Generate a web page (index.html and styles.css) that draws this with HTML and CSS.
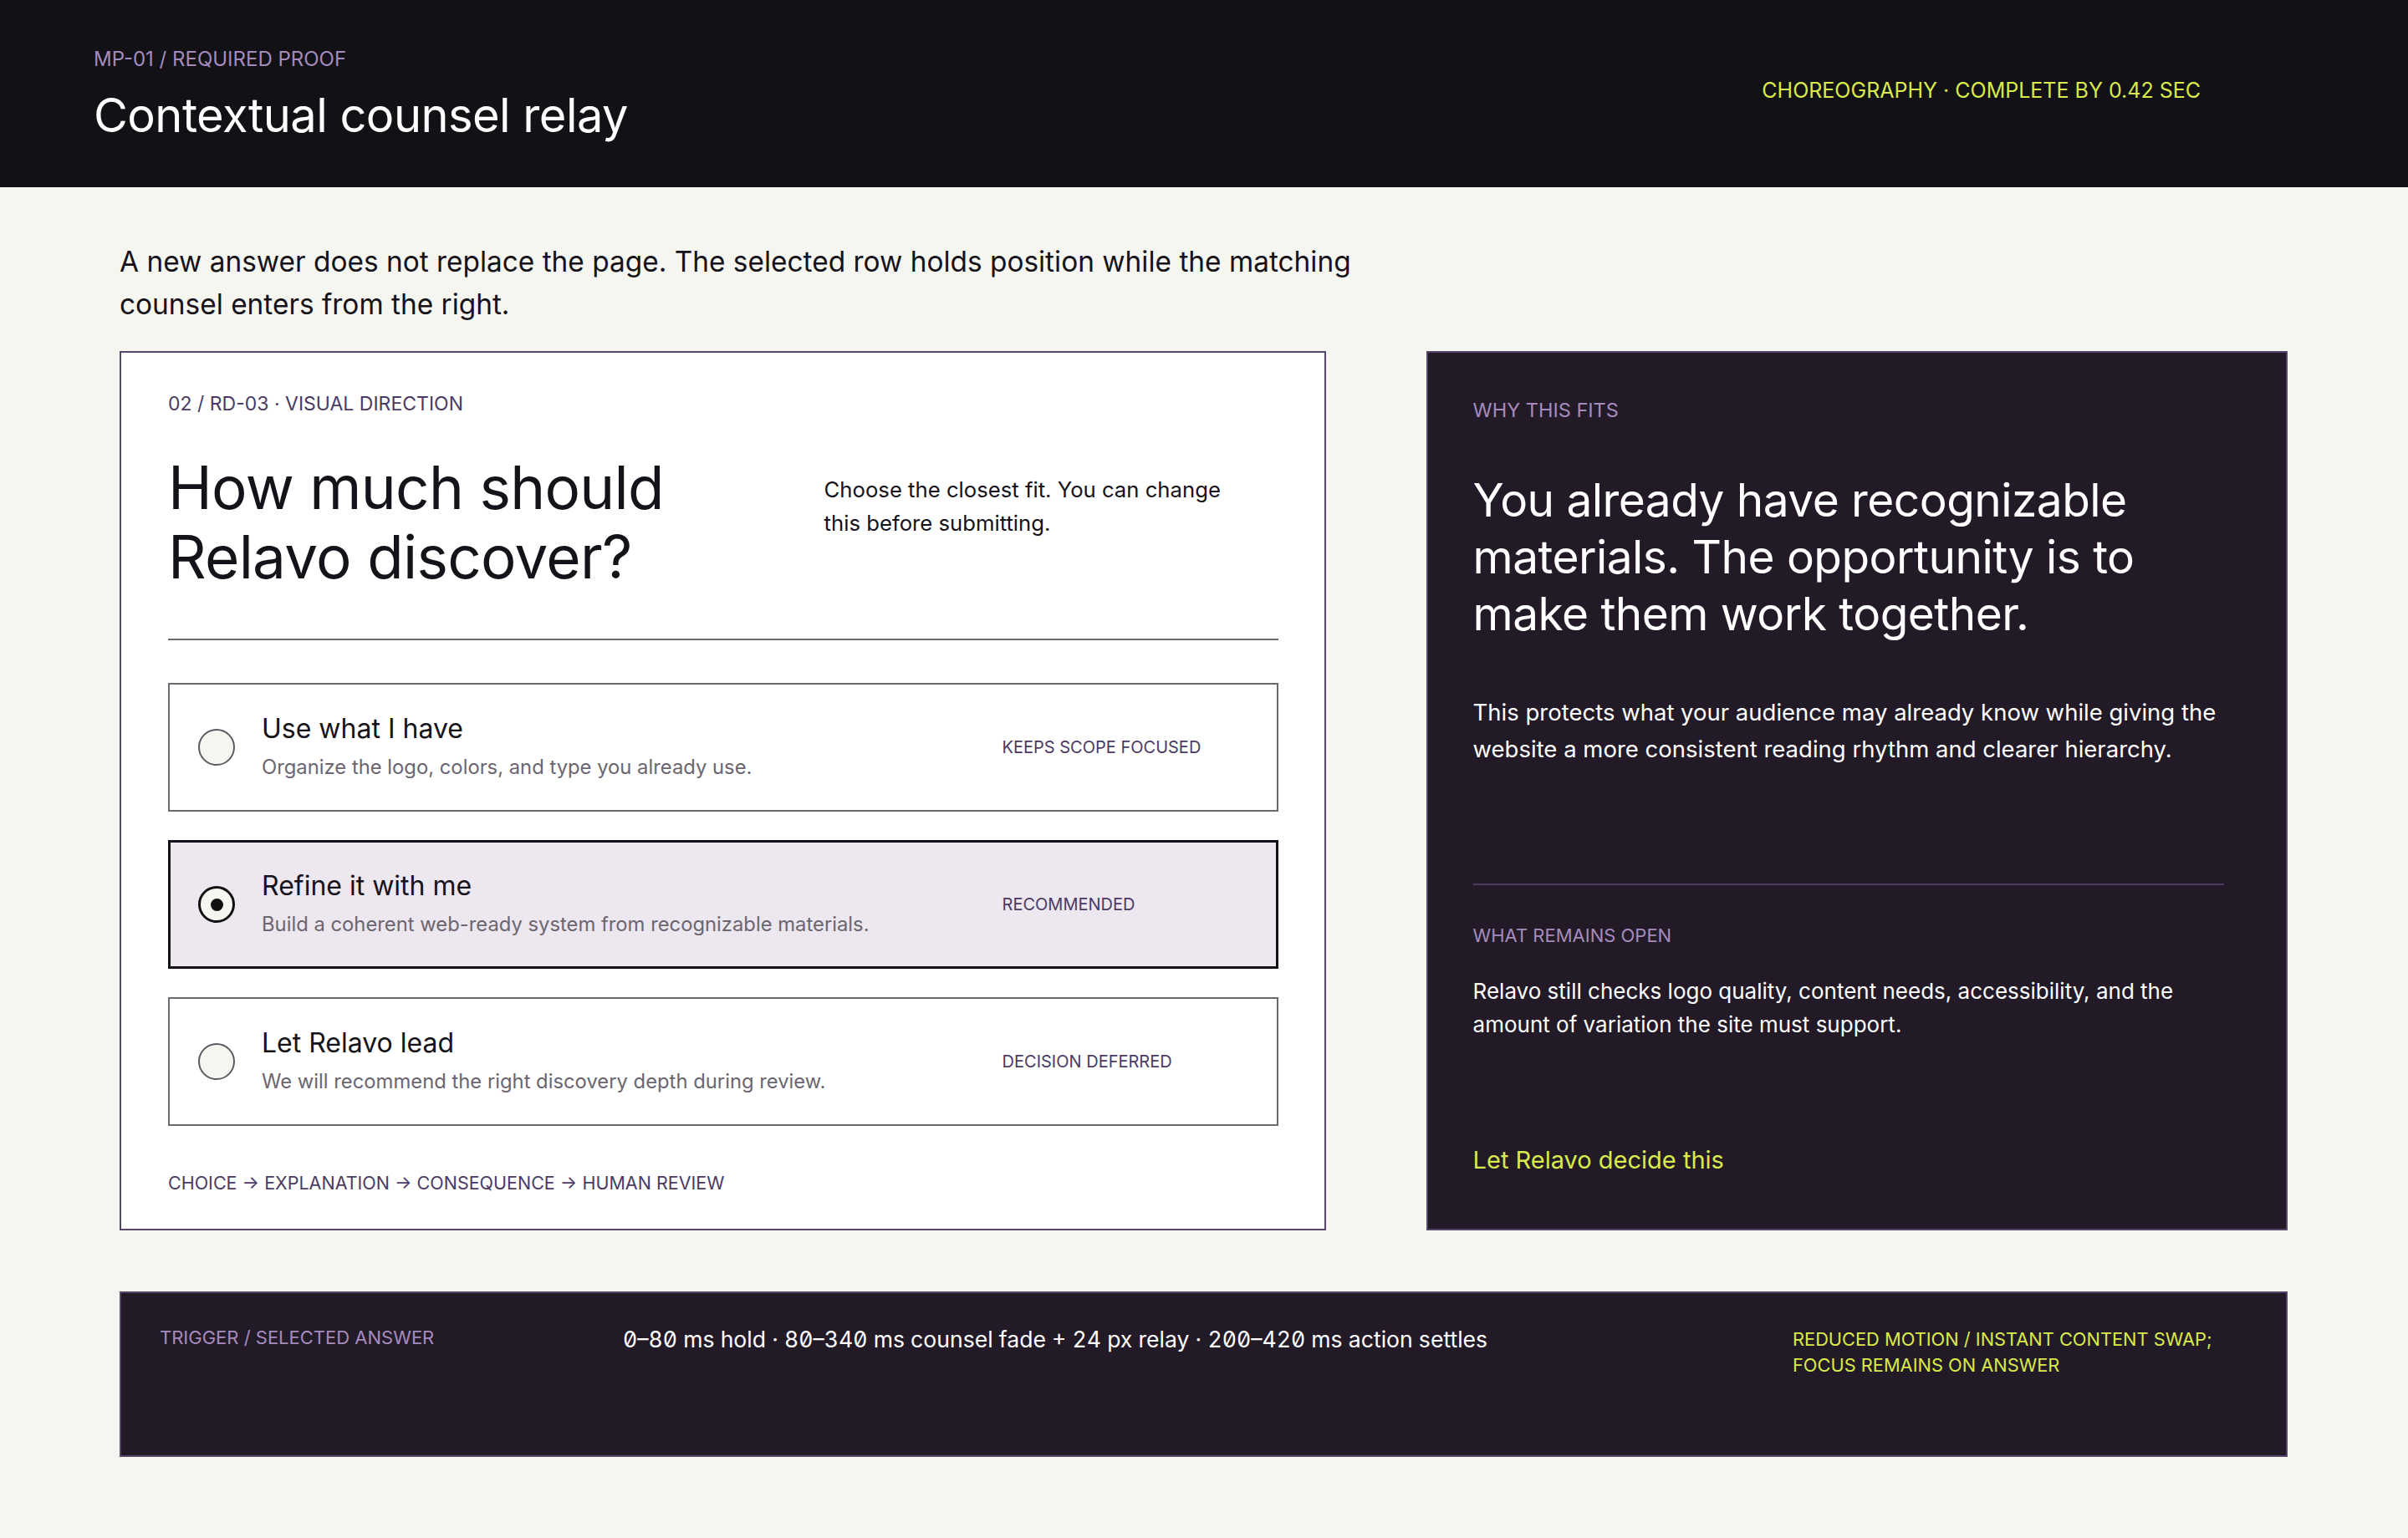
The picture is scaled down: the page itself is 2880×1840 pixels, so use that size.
FILE: index.html
```html
<!DOCTYPE html>
<html lang="en">
<head>
<meta charset="utf-8">
<title>Contextual counsel relay</title>
<link rel="stylesheet" href="styles.css">
</head>
<body>
<header class="topbar">
  <div class="topbar-left">
    <p class="eyebrow">MP-01 / REQUIRED PROOF</p>
    <h1 class="page-title">Contextual counsel relay</h1>
  </div>
  <p class="topbar-meta">CHOREOGRAPHY · COMPLETE BY 0.42 SEC</p>
</header>

<main class="main">
  <p class="intro">A new answer does not replace the page. The selected row holds position while the matching counsel enters from the right.</p>

  <div class="stage">
    <section class="question-card">
      <p class="q-label">02 / RD-03 · VISUAL DIRECTION</p>
      <div class="q-head">
        <h2 class="q-title">How much should Relavo discover?</h2>
        <p class="q-desc">Choose the closest fit. You can change this before submitting.</p>
      </div>
      <div class="q-rule"></div>
      <div class="options">
        <div class="option">
          <span class="radio"></span>
          <div class="opt-text">
            <p class="opt-title">Use what I have</p>
            <p class="opt-sub">Organize the logo, colors, and type you already use.</p>
          </div>
          <span class="opt-tag">KEEPS SCOPE FOCUSED</span>
        </div>
        <div class="option option-selected">
          <span class="radio radio-on"></span>
          <div class="opt-text">
            <p class="opt-title">Refine it with me</p>
            <p class="opt-sub">Build a coherent web-ready system from recognizable materials.</p>
          </div>
          <span class="opt-tag">RECOMMENDED</span>
        </div>
        <div class="option">
          <span class="radio"></span>
          <div class="opt-text">
            <p class="opt-title">Let Relavo lead</p>
            <p class="opt-sub">We will recommend the right discovery depth during review.</p>
          </div>
          <span class="opt-tag">DECISION DEFERRED</span>
        </div>
      </div>
      <p class="flow">CHOICE → EXPLANATION → CONSEQUENCE → HUMAN REVIEW</p>
    </section>

    <aside class="counsel">
      <p class="c-label">WHY THIS FITS</p>
      <p class="c-quote">You already have recognizable materials. The opportunity is to make them work together.</p>
      <p class="c-body">This protects what your audience may already know while giving the website a more consistent reading rhythm and clearer hierarchy.</p>
      <div class="c-rule"></div>
      <p class="c-label c-label-open">WHAT REMAINS OPEN</p>
      <p class="c-body c-body-small">Relavo still checks logo quality, content needs, accessibility, and the amount of variation the site must support.</p>
      <p class="c-action">Let Relavo decide this</p>
    </aside>
  </div>

  <section class="timeline">
    <p class="t-label">TRIGGER / SELECTED ANSWER</p>
    <p class="t-steps">0–80 ms hold · 80–340 ms counsel fade + 24 px relay · 200–420 ms action settles</p>
    <p class="t-note">REDUCED MOTION / INSTANT CONTENT SWAP; FOCUS REMAINS ON ANSWER</p>
  </section>
</main>
</body>
</html>
```

FILE: styles.css
```css
* {
  box-sizing: border-box;
}

html, body {
  margin: 0;
  padding: 0;
}

body {
  background: #f6f6f1;
  color: #16121a;
  font-family: Inter, "Noto Sans", "Liberation Sans", sans-serif;
}

p, h1, h2 {
  margin: 0;
}

/* ---------- top bar ---------- */
.topbar {
  height: 224px;
  background: #111116;
  display: flex;
  align-items: center;
  justify-content: space-between;
  padding: 4px 248px 0 112px;
}

.eyebrow {
  font-size: 24px;
  line-height: 28px;
  color: #a58bbd;
}

.page-title {
  margin-top: 20px;
  font-size: 56px;
  line-height: 66px;
  font-weight: 400;
  color: #ffffff;
  letter-spacing: -0.01em;
}

.topbar-meta {
  font-size: 25px;
  line-height: 30px;
  color: #d9ea4c;
  margin-bottom: 12px;
}

/* ---------- main ---------- */
.main {
  padding: 64px 144px 0 143px;
}

.intro {
  max-width: 1540px;
  font-size: 33.4px;
  line-height: 51px;
  color: #16121a;
}

.stage {
  margin-top: 30px;
  display: grid;
  grid-template-columns: 1.4fr 1fr;
  column-gap: 120px;
}

/* ---------- question card ---------- */
.question-card {
  background: #ffffff;
  border: 2px solid #55466a;
  padding: 46px 55px 40px 56px;
}

.q-label {
  font-size: 23px;
  line-height: 30px;
  color: #4b3b64;
}

.q-head {
  margin-top: 44px;
  display: grid;
  grid-template-columns: minmax(0, 1fr) 543px;
  column-gap: 40px;
}

.q-title {
  font-size: 71px;
  line-height: 83px;
  font-weight: 400;
  color: #16121a;
  letter-spacing: -0.01em;
}

.q-desc {
  margin-top: 24px;
  max-width: 505px;
  font-size: 25.7px;
  line-height: 40px;
  color: #16121a;
}

.q-rule {
  margin-top: 56px;
  height: 2px;
  background: #6d6870;
}

.options {
  margin-top: 51px;
  display: flex;
  flex-direction: column;
  gap: 34px;
}

.option {
  height: 154px;
  border: 2px solid #6d6870;
  background: #ffffff;
  display: grid;
  grid-template-columns: 44px minmax(0, 1fr) 294px;
  column-gap: 32px;
  align-items: center;
  padding: 0 34px;
}

.option-selected {
  border: 3px solid #15111a;
  background: #ede7ef;
  padding: 0 33px;
}

.radio {
  width: 44px;
  height: 44px;
  border-radius: 50%;
  border: 2px solid #5e5a62;
  background: #f6f6f1;
  display: flex;
  align-items: center;
  justify-content: center;
}

.radio-on {
  border: 3px solid #111111;
}

.radio-on::after {
  content: "";
  width: 15px;
  height: 15px;
  border-radius: 50%;
  background: #111111;
}

.opt-title {
  font-size: 32px;
  line-height: 40px;
  color: #16121a;
}

.opt-sub {
  margin-top: 8px;
  font-size: 23.8px;
  line-height: 36px;
  color: #6b6670;
}

.opt-tag {
  font-size: 20px;
  line-height: 28px;
  color: #4b3b64;
}

.flow {
  margin-top: 53px;
  font-size: 21.5px;
  line-height: 30px;
  color: #4b3b64;
}

/* ---------- counsel panel ---------- */
.counsel {
  background: #231a28;
  border: 2px solid #55466a;
  padding: 54px 74px 40px 54px;
  color: #ffffff;
}

.c-label {
  font-size: 23.5px;
  line-height: 30px;
  color: #a58bbd;
}

.c-quote {
  margin-top: 58px;
  font-size: 55px;
  line-height: 68px;
  letter-spacing: -0.01em;
  color: #ffffff;
}

.c-body {
  margin-top: 62px;
  font-size: 27.5px;
  line-height: 44px;
  color: #ffffff;
}

.c-rule {
  margin-top: 139px;
  height: 2px;
  background: #4d3c5f;
}

.c-label-open {
  margin-top: 45px;
  font-size: 22px;
}

.c-body-small {
  margin-top: 32px;
  font-size: 26px;
  line-height: 40px;
}

.c-action {
  margin-top: 122px;
  font-size: 29px;
  line-height: 40px;
  color: #d9ea4c;
}

/* ---------- timeline bar ---------- */
.timeline {
  margin-top: 73px;
  min-height: 198px;
  background: #231a28;
  border: 2px solid #55466a;
  padding: 40px 48px 40px 46px;
  display: grid;
  grid-template-columns: 506px 1351px minmax(0, 1fr);
  column-gap: 48px;
  align-items: start;
}

.t-label {
  font-size: 22px;
  line-height: 26px;
  color: #a58bbd;
}

.t-steps {
  font-size: 26.6px;
  line-height: 30px;
  color: #ffffff;
  font-feature-settings: "zero" 1, "tnum" 1;
}

.t-note {
  font-size: 21.8px;
  line-height: 31px;
  color: #d9ea4c;
}
```
